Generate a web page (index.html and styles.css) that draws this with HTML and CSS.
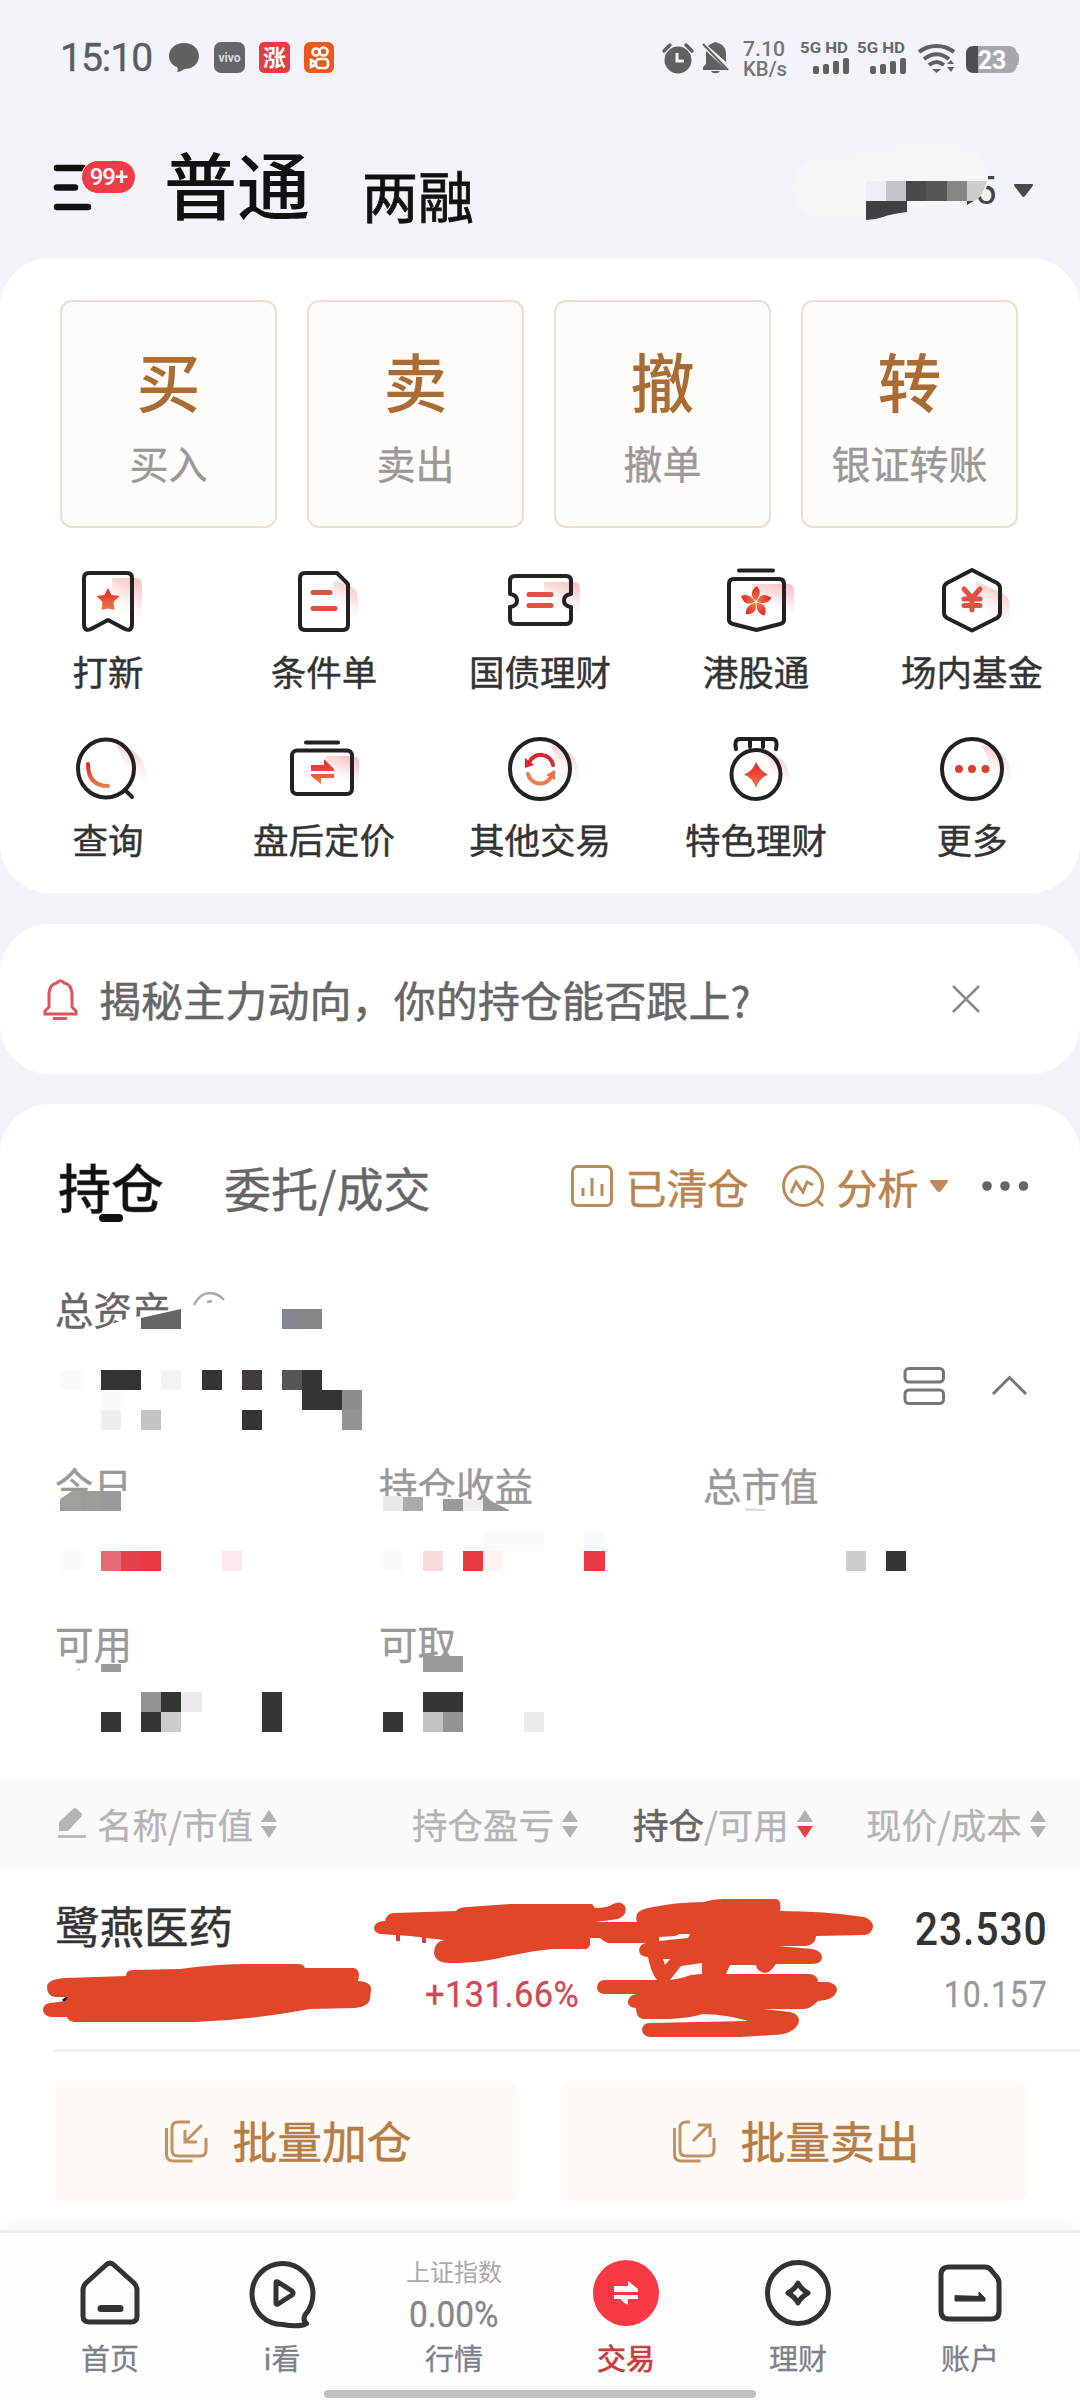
FILE: index.html
```html
<!DOCTYPE html>
<html lang="zh-CN">
<head>
<meta charset="utf-8">
<title>交易</title>
<link rel="stylesheet" href="styles.css">
</head>
<body>
<svg class="defs" width="0" height="0" aria-hidden="true">
  <defs>
    <linearGradient id="red" x1="0" y1="0" x2="0" y2="1"><stop offset="0" stop-color="#e8202a"/><stop offset="1" stop-color="#f07a48"/></linearGradient>
    <linearGradient id="glow" x1="1" y1="0" x2=".55" y2="1"><stop offset="0" stop-color="#f9b9b9"/><stop offset=".4" stop-color="#fbd0d0" stop-opacity=".8"/><stop offset="1" stop-color="#fff" stop-opacity="0"/></linearGradient>
  </defs>
</svg>
<div class="screen">
  <div class="status">
    <span class="clock num">15:10</span>
    <svg class="status-left" width="170" height="34" viewBox="166 41 170 34">
      <path d="M184 43c9 0 15 6 15 13s-6 13-14 13c-2 0-3 3-8 3 1-2 1-4 0-5-5-2-8-6-8-11 0-7 6-13 15-13z" fill="#5f6163"/>
      <rect x="214" y="42" width="31" height="31" rx="7" fill="#646668"/>
      <text x="229.500" y="62" text-anchor="middle" class="vivo">vivo</text>
      <rect x="259" y="42" width="31" height="31" rx="5" fill="#e83c43"/>
      <text x="274.500" y="66" text-anchor="middle" class="rise">涨</text>
      <rect x="304" y="42" width="30" height="31" rx="6" fill="#ea5a1e"/>
      <g fill="none" stroke="#fff" stroke-width="2.600"><circle cx="316" cy="52" r="3.500"/><circle cx="323.500" cy="51.500" r="4"/><rect x="316" y="59" width="12" height="9" rx="3"/><path d="M315 62l-4-2v7l4-2z"/></g>
    </svg>
    <svg class="status-right" width="362" height="40" viewBox="660 38 362 40">
      <g fill="#5f6163">
        <circle cx="678" cy="60" r="13.500"/><path d="M664 51l6-6M692 51l-6-6" stroke="#5f6163" stroke-width="3.500" stroke-linecap="round"/>
        <path d="M677 53v8h7" fill="none" stroke="#f3f4f9" stroke-width="3"/>
        <path d="M706 51l21 19h-24v-3l3-3zM708 46c2-2 3-2 5-3 1-1 4-1 5 0 6 2 8 6 8 11v8zM711 71h9c-1 3-8 3-9 0z"/>
        <path d="M703 44l25 26" stroke="#5f6163" stroke-width="2"/>
        <rect x="813" y="66" width="6" height="8" rx="2"/><rect x="823" y="64" width="6" height="10" rx="2"/><rect x="833" y="61" width="6" height="13" rx="2"/><rect x="843" y="58" width="6" height="16" rx="2"/>
        <rect x="870" y="66" width="6" height="8" rx="2"/><rect x="880" y="64" width="6" height="10" rx="2"/><rect x="890" y="61" width="6" height="13" rx="2"/><rect x="900" y="58" width="6" height="16" rx="2"/>
        <path d="M932 69h9l-4.500 4zM947 64l4-4 3 4zM947 67h7l-3 5z"/>
      </g>
      <g fill="none" stroke="#5f6163" stroke-width="4"><path d="M919 52c10-8 25-8 35 0M924 59c8-6 17-6 25 0M929 65c5-4 10-4 15 0"/></g>
      <path d="M1013 53h5q2 5 0 12h-5z" fill="#a5a7ab"/>
      <rect x="966" y="46" width="51" height="27" rx="8" fill="#a5a7ab"/><path d="M974 46h4v27h-4q-8 0-8-8v-11q0-8 8-8z" fill="#4c4e50"/>
      <text x="992" y="68.500" text-anchor="middle" class="batt">23</text>
      <text x="743" y="56" class="rate" textLength="42" lengthAdjust="spacingAndGlyphs">7.10</text>
      <text x="743" y="75.500" class="rate" textLength="44" lengthAdjust="spacingAndGlyphs">KB/s</text>
      <text x="800" y="53" class="net" textLength="48" lengthAdjust="spacingAndGlyphs">5G HD</text>
      <text x="857" y="53" class="net" textLength="48" lengthAdjust="spacingAndGlyphs">5G HD</text>
    </svg>
  </div>

  <header class="header">
    <div class="menu">
      <svg width="40" height="50" viewBox="54 162 40 50"><path d="M57 168h26M57 187.500h18M57 207h31" stroke="#111" stroke-width="6.500" stroke-linecap="round"/></svg>
      <span class="badge num">99+</span>
    </div>
    <h1 class="mode-on">普通</h1>
    <h2 class="mode">两融</h2>
    <svg class="account" width="250" height="90" viewBox="790 138 250 90">
      <text x="975" y="204" class="acct-no">5</text>
      <path d="M838 155C870 156 885 142 925 142C970 140 990 160 988 181C985 203 965 206 907 206C890 211 880 220 845 220C810 222 793 208 793 188C793 168 810 154 838 155Z" fill="#f6f6f6"/>
      <path d="M866 181h20v20h-20z" fill="#eeeff6"/><path d="M886 181h20v20h-20z" fill="#c3c5cb"/><path d="M906 181h20v20h-20z" fill="#4a4a4a"/><path d="M926 181h21v20h-21z" fill="#545652"/><path d="M947 181h20v20h-20z" fill="#868686"/><path d="M967 181h20q-4 15-12 20h-8z" fill="#cdcdcd"/>
      <path d="M866 201h41v11q-16 2-24 5t-17 3z" fill="#423e41"/><path d="M967 201h7l-7 4z" fill="#424242"/>
      <path d="M1015 184h17q2 0 0 3l-7 9q-2 2-3 0l-7-9q-2-3 0-3z" fill="#4a4a4a"/>
    </svg>
  </header>

  <section class="card trade">
    <div class="quick">
      <button class="quick-item"><b>买</b><span>买入</span></button>
      <button class="quick-item"><b>卖</b><span>卖出</span></button>
      <button class="quick-item"><b>撤</b><span>撤单</span></button>
      <button class="quick-item"><b>转</b><span>银证转账</span></button>
    </div>
    <div class="grid">
      <div class="tool"><svg class="ico" width="72" height="66" viewBox="72 568 72 66"><path d="M112 578h24q6 0 6 8v34h-30z" fill="url(#glow)"/><path d="M84 578q0-5 5-5h38q5 0 5 5v46q0 8-7 5l-17-9-17 9q-7 3-7-5z"/><path class="f" d="M108 588l3.500 7 8 1-6 6 1 8-6.500-1.500-6.500 1.500 1-8-6-6 8-1z"/></svg><span>打新</span></div>
      <div class="tool"><svg class="ico" width="72" height="66" viewBox="288 568 72 66"><path d="M334 581l14 4q10 4 10 14v20h-24z" fill="url(#glow)"/><path d="M305 573h32l11 11v41q0 5-5 5h-38q-5 0-5-5v-47q0-5 5-5z"/><path class="r" d="M313 592.500h17M313 608.500h22"/></svg><span>条件单</span></div>
      <div class="tool"><svg class="ico" width="72" height="66" viewBox="504 568 72 66"><path d="M544 582h30q6 0 6 7v24h-36z" fill="url(#glow)"/><path d="M515 576h51q5 0 5 5v13q-7 1-7 6.500t7 6.500v12q0 5-5 5h-51q-5 0-5-5v-12q7-1 7-6.500t-7-6.500v-13q0-5 5-5z"/><path class="r" d="M529 594.500h22M529 605.500h22"/></svg><span>国债理财</span></div>
      <div class="tool"><svg class="ico" width="72" height="66" viewBox="720 568 72 66"><path d="M752 584h36q6 0 6 7v24h-42z" fill="url(#glow)"/><path d="M739 570.500h34M734 579h45q5 0 5 5v36q0 3-4 4l-23.500 6-23.500-6q-4-1-4-4v-36q0-5 5-5z"/><g class="f"><path id="petal" d="M756 601q-9-8 1-15q6 7-1 15z"/><use href="#petal" transform="rotate(72 756 602)"/><use href="#petal" transform="rotate(144 756 602)"/><use href="#petal" transform="rotate(216 756 602)"/><use href="#petal" transform="rotate(288 756 602)"/></g></svg><span>港股通</span></div>
      <div class="tool"><svg class="ico" width="72" height="66" viewBox="936 568 72 66"><path d="M976 581l28 13q5 3 5 9v25h-33z" fill="url(#glow)"/><path d="M972 570l25 13q3 2 3 5v25q0 3-3 5l-25 12.500-25-12.500q-3-2-3-5v-25q0-3 3-5z"/><path class="r" d="M964 589l8 9 8-9M972 599v11M964 599h16M964 605.500h16"/></svg><span>场内基金</span></div>
      <div class="tool"><svg class="ico" width="72" height="66" viewBox="72 735 72 66"><path d="M116 744q30 4 31 37h-22q1-22-9-37z" fill="url(#glow)"/><ellipse cx="106" cy="767.500" rx="28" ry="29"/><path d="M125 789l7 7"/><path d="M88 763q0 22 20 22" stroke="url(#red)"/></svg><span>查询</span></div>
      <div class="tool"><svg class="ico" width="72" height="66" viewBox="288 735 72 66"><path d="M326 755h27q6 0 6 7v24h-33z" fill="url(#glow)"/><path d="M306 741.500h32"/><rect x="292" y="749.500" width="60" height="43.500" rx="5"/><path class="f" d="M311 764h13v-6l10 10v2h-23zM334 773v4h-13v6l-10-8v-2z"/></svg><span>盘后定价</span></div>
      <div class="tool"><svg class="ico" width="72" height="66" viewBox="504 735 72 66"><path d="M550 744q30 4 30 37h-22q1-22-8-37z" fill="url(#glow)"/><circle cx="540" cy="768" r="30"/><path d="M529 762a12.500 12.500 0 0 1 24 2" stroke="#dc2430"/><path d="M552 774a12.500 12.500 0 0 1-24-1" stroke="#ee7c48"/><path d="M525 757v10l9-3z" fill="#dc2430" stroke="none"/><path d="M555 779v-10l-9 5z" fill="#ee7048" stroke="none"/></svg><span>其他交易</span></div>
      <div class="tool"><svg class="ico" width="72" height="66" viewBox="720 735 72 66"><path d="M764 751q27 4 27 35h-19q1-20-8-35z" fill="url(#glow)"/><path d="M736 748q-2-9 3-10h34q5 1 3 10M750 738v8M763 738v8"/><circle cx="756" cy="773.500" r="24.500"/><path class="f" d="M756 761q4 9 12 12.500q-9 4-12 13.500q-3-10-12-13.500q9-3.500 12-12.500z"/></svg><span>特色理财</span></div>
      <div class="tool"><svg class="ico" width="72" height="66" viewBox="936 735 72 66"><path d="M981 744q30 4 31 37h-22q1-22-9-37z" fill="url(#glow)"/><circle cx="972" cy="768" r="30"/><g fill="#dc4030" stroke="none"><circle cx="959" cy="768" r="4"/><circle cx="972" cy="768" r="4"/><circle cx="985.500" cy="768" r="4"/></g></svg><span>更多</span></div>
    </div>
  </section>

  <section class="card banner">
    <svg width="36" height="44" viewBox="42 977 36 44" fill="none" stroke="#dd555c" stroke-width="3"><path d="M45 1014v-3l4-4v-14q1-9 8-10q1-2 3.500-2t3.500 2q7 1 8 10v14l4 4v3zM53 1018.500h14"/></svg>
    <p>揭秘主力动向，你的持仓能否跟上?</p>
    <svg class="close" width="30" height="30" viewBox="951 985 30 30"><path d="M953 986l26 26M979 986l-26 26" stroke="#8a8a8a" stroke-width="2.500"/></svg>
  </section>

  <section class="card holdings">
    <div class="tabs">
      <span class="tab tab-on">持仓</span>
      <span class="tab">委托/成交</span>
      <svg class="t1" width="44" height="44" viewBox="570 1165 44 44" fill="none" stroke="#bd8a58" stroke-width="3"><rect x="572.500" y="1167.500" width="39" height="39" rx="5"/><path d="M583 1189v8M592 1179v18M602 1185v12"/></svg>
      <span class="link">已清仓</span>
      <svg class="t2" width="44" height="44" viewBox="780 1165 44 44" fill="none" stroke="#bd8a58" stroke-width="3"><circle cx="802" cy="1187" r="19.500"/><path d="M815 1200l7 7M790 1194l5-11 7 10 4-10 6 3"/></svg>
      <span class="link">分析</span>
      <svg class="t3" width="20" height="14" viewBox="928 1178 20 14"><path d="M930 1179h16q2 0 0 3l-6 8q-2 2-4 0l-6-8q-2-3 0-3z" fill="#bd8a58"/></svg>
      <svg class="t4" width="48" height="12" viewBox="979 1181 48 12" fill="#666"><circle cx="985" cy="1187" r="4.800"/><circle cx="1003" cy="1187" r="4.800"/><circle cx="1021.500" cy="1187" r="4.800"/></svg>
    </div>
    <div class="asset"><span>总资产</span><svg width="36" height="18" viewBox="191 1290 36 18" fill="none" stroke="#aaa" stroke-width="2.500"><path d="M194 1305q6-12 16-12q8 0 14 7M207 1302l5-1"/></svg></div>
    <div class="asset-tools">
      <svg width="44" height="40" viewBox="902 1366 44 40" fill="none" stroke="#777" stroke-width="3"><rect x="905" y="1368.500" width="38.500" height="13.500" rx="4"/><rect x="905" y="1390" width="38.500" height="13.500" rx="4"/></svg>
      <svg width="36" height="24" viewBox="992 1374 36 24" fill="none" stroke="#777" stroke-width="3"><path d="M993 1394l16.500-16.500 16.500 16.500"/></svg>
    </div>
    <div class="stats">
      <span>今日</span><span>持仓收益</span><span>总市值</span>
      <span>可用</span><span>可取</span>
    </div>

    <div class="thead">
      <svg class="pencil" width="30" height="32" viewBox="57 1810 30 32"><path d="M59 1833v-9l14-13q2-2 4 0l4 4q2 2 0 4l-13 14z" fill="#b4b4b4"/><path d="M58 1838.500h28" stroke="#b4b4b4" stroke-width="2.500"/></svg>
      <span class="c1">名称/市值</span><svg class="sort" viewBox="0 0 16 30"><path d="M8 1l8 12H0z"/><path d="M8 29l8-12H0z"/></svg>
      <span class="c2">持仓盈亏</span><svg class="sort" viewBox="0 0 16 30"><path d="M8 1l8 12H0z"/><path d="M8 29l8-12H0z"/></svg>
      <span class="c3"><em>持仓</em>/可用</span><svg class="sort" viewBox="0 0 16 30"><path d="M8 1l8 12H0z"/><path class="down" d="M8 29l8-12H0z"/></svg>
      <span class="c4">现价/成本</span><svg class="sort" viewBox="0 0 16 30"><path d="M8 1l8 12H0z"/><path d="M8 29l8-12H0z"/></svg>
    </div>
    <div class="row">
      <span class="stock">鹭燕医药</span>
      <span class="rate-up num">+131.66%</span>
      <div class="prices"><span class="price num">23.530</span><span class="cost num">10.157</span></div>
    </div>
    <div class="batch">
      <button><svg width="44" height="44" viewBox="166 2120 44 44"><path d="M192 2123h-12q-6 0-6 6v22q0 6 6 6h22q6 0 6-6v-12M168.500 2129v26q0 7 7 7h19M204 2126l-16 16M187 2131v12h12"/></svg>批量加仓</button>
      <button><svg width="44" height="44" viewBox="674 2120 44 44"><path d="M692 2123h-4q-6 0-6 6v22q0 6 6 6h22q6 0 6-6v-12M676.500 2129v26q0 7 7 7h19M695 2142l16-16M700 2126h12v12"/></svg>批量卖出</button>
    </div>
  </section>

  <nav class="nav">
    <div class="nav-item"><svg width="70" height="70" viewBox="75 2259 70 70"><path d="M83 2290q0-4 3-7l20-18q4-4 8 0l20 18q3 3 3 7v26q0 6-6 6H89q-6 0-6-6z"/><path d="M101 2308.500h19" stroke-width="7"/></svg><span>首页</span></div>
    <div class="nav-item"><svg width="70" height="70" viewBox="247 2259 70 70"><path d="M305 2315q8-9 8-22a30.500 30.500 0 1 0-30.500 31.500q17 3 24-1q-4-3-1.500-8.500z"/><path d="M276 2283q0-2 2-1l14 9q2 2 0 4l-14 9q-2 1-2-1z"/></svg><span>i看</span></div>
    <div class="nav-item index"><small>上证指数</small><b class="num">0.00%</b><span>行情</span></div>
    <div class="nav-item active"><svg width="70" height="70" viewBox="591 2259 70 70"><circle cx="626" cy="2293" r="33" fill="#f83842" stroke="none"/><path d="M614 2286h14v-5l10 8v3h-24zM638 2295v4h-10v6q-6-3-7-6h-7v-4z" fill="#fff" stroke="none"/></svg><span>交易</span></div>
    <div class="nav-item"><svg width="70" height="70" viewBox="763 2259 70 70"><circle cx="798" cy="2293" r="30.500"/><path d="M798 2283q3 6 10 10q-7 4-10 10q-3-6-10-10q7-4 10-10z"/></svg><span>理财</span></div>
    <div class="nav-item"><svg width="70" height="70" viewBox="935 2259 70 70"><path d="M949 2267h36q4 0 6 3l5 6q3 3 3 7v28q0 8-8 8h-42q-8 0-8-8v-36q0-8 8-8z"/><path d="M955 2296v5h30v-3l-6-6v4z" fill="#333" stroke-width="1"/></svg><span>账户</span></div>
  </nav>
  <div class="home-bar"></div>

  <!-- privacy marks laid over the private figures -->
  <svg class="privacy" width="1080" height="2400" viewBox="0 0 1080 2400">
    <path d="M93 1331l35-13 14-2v15zM141 1320l27-8v22h-27zM56 1491h75v22H56zM380 1497l58-1 40 4h11l19 10v5H380z" fill="#fff"/>
    <g shape-rendering="crispEdges">
      <g fill="#333532"><path d="M101 1370h40v20h-40zM202 1370h20v20h-20zM302 1370h20v20h21v20h-41zM242 1410h20v20h-20zM262 1692h20v40h-20zM161 1692h20v20h-20zM101 1712h20v20h-20zM141 1712h20v20h-20zM383 1712h20v20h-20zM423 1692h40v20h-40zM886 1551h20v20h-20z"/></g>
      <path d="M60 1370h21v20H60zM101 1390h20v20h-20z" fill="#fafcfa"/><path d="M161 1370h20v20h-20z" fill="#f5f3f6"/>
      <path d="M242 1370h20v20h-20z" fill="#423c40"/><path d="M282 1370h20v20h-20z" fill="#545654"/>
      <path d="M342 1390h20v20h-20z" fill="#8c8e8b"/><path d="M342 1410h20v20h-20zM141 1692h20v20h-20zM443 1712h20v20h-20z" fill="#949295"/>
      <path d="M101 1410h20v20h-20z" fill="#eee"/><path d="M141 1410h20v20h-20zM423 1712h20v20h-20z" fill="#c4c2c5"/>
      <path d="M161 1712h20v20h-20zM846 1551h20v20h-20z" fill="#cdcbce"/><path d="M181 1692h21v20h-21zM524 1712h20v20h-20z" fill="#edebee"/>
      <path d="M282 1309h20v20h-20z" fill="#838591"/><path d="M302 1309h20v20h-20z" fill="#868686"/>
      <path d="M101 1551h20v20h-20z" fill="#e56c77"/><path d="M121 1551h20v20h-20z" fill="#e2404a"/><path d="M141 1551h20v20h-20zM463 1551h20v20h-20zM584 1551h21v20h-21z" fill="#ea3a43"/>
      <path d="M222 1551h20v20h-20z" fill="#fbe9ed"/><path d="M423 1551h20v20h-20z" fill="#f6dadd"/><path d="M483 1551h20v20h-20z" fill="#fdf3f2"/>
      <path d="M60 1551h21v20H60zM383 1551h20v20h-20zM483 1531h61v20h-61zM584 1531h21v20h-21z" fill="#fcfaff"/>
      <path d="M81 1491h20v20H81z" fill="#9d9c99"/><path d="M101 1491h20v20h-20zM443 1499h20v12h-20zM101 1664h20v8h-20zM423 1656h40v16h-40z" fill="#9b999c"/>
      <path d="M383 1496h20v15h-20z" fill="#e8e8e8"/><path d="M403 1497h20v14h-20z" fill="#acaaad"/><path d="M463 1500h20v11h-20z" fill="#efefef"/>
    </g>
    <path d="M141 1318l40-9v20h-40z" fill="#636562"/><path d="M60 1499l12-8h9v20H60z" fill="#9da29b"/><path d="M483 1497l26 13v1h-26z" fill="#9b999c"/>
    <path d="M745 1508l20 1v2h-20zM75 1671l5-4v4z" fill="#ddd"/>
    <path d="M63 2001l5-4" stroke="#222" stroke-width="3"/><path d="M398 1932v9M424 1934v9" stroke="#de3548" stroke-width="4"/>
    <g fill="#e14628" fill-rule="evenodd">
      <path d="M47 1987Q47 1979 66 1978L126 1976Q126 1970 133 1970L180 1969Q215 1964 250 1964H300Q304 1965 305 1968H354Q361 1970 358 1981Q372 1982 371 1990L370 1999Q368 2007 355 2008L310 2009Q250 2020 195 2022H74Q68 2021 67 2017H50Q43 2015 43 2010Q43 2004 50 2003L66 2001L68 1997H55Q47 1996 47 1987Z"/>
      <path d="M374 1928Q375 1921 385 1921Q387 1913 394 1913L456 1911Q459 1907 468 1907L510 1904H592L595 1908Q608 1908 613 1904Q620 1900 625 1906Q628 1915 618 1919L595 1922H637Q633 1911 648 1908Q675 1902 704 1902Q713 1899 724 1899H776Q782 1900 780 1911Q825 1911 864 1917Q873 1920 873 1927Q872 1934 864 1935L816 1936Q816 1944 806 1946H778L812 1949Q822 1951 822 1957Q822 1964 812 1964H776Q770 1973 765 1973Q757 1972 756 1965H730L726 1974H810Q818 1975 818 1982H828Q837 1984 837 1990Q835 2000 818 2001Q810 2009 804 2009H764L790 2012Q799 2014 799 2021Q798 2027 791 2031Q785 2035 772 2035L740 2037H650Q642 2036 642 2029Q643 2023 650 2023L700 2022L748 2021Q730 2015 703 2014Q690 2018 670 2019H643Q636 2018 636 2008Q627 2007 628 2001Q629 1995 637 1994H604Q597 1993 597 1987Q598 1980 605 1980H657Q651 1973 648 1957Q639 1957 639 1950Q640 1944 646 1943H608Q603 1941 600 1938H590V1945Q588 1950 583 1949H552C510 1953 490 1964 450 1963Q435 1963 434 1953Q434 1942 444 1940L410 1936L380 1934Q374 1932 374 1928ZM659 1937L675 1936L680 1934H690L688 1938L659 1941ZM663 1959H670L665 1965ZM681 1966L702 1963V1974L691 1975Q681 1979 670 1980Z"/>
    </g>
  </svg>
</div>
</body>
</html>
```
FILE: styles.css
```css
* { box-sizing: border-box; margin: 0; padding: 0; }
body { width: 1080px; height: 2400px; overflow: hidden; background: #f3f4f9; font-family: "Noto Sans CJK SC", sans-serif; line-height: 1; color: #333; }
button { border: 0; background: none; font: inherit; }
svg { display: block; flex: none; overflow: visible; }
.defs { position: absolute; }
.num { font-family: Roboto, "Noto Sans CJK SC", sans-serif; }
.screen { position: relative; width: 1080px; height: 2400px; display: flex; flex-direction: column; }

.status { height: 116px; display: flex; align-items: center; padding: 0 58px 0 60px; }
.clock { width: 106px; font-size: 39px; letter-spacing: -1px; color: #5b5d5f; -webkit-text-stroke: .4px #5b5d5f; }
.status-right { margin-left: auto; }
.vivo { font: 700 12px Roboto, sans-serif; fill: #ddd; }
.rise { font: 700 23px "Noto Sans CJK SC", sans-serif; fill: #fff; }
.batt { font: 700 25px Roboto, sans-serif; fill: #fff; }
.rate { font: 500 19.500px/1 Roboto, sans-serif; fill: #737577; }
.net { font: 700 15.500px Roboto, sans-serif; fill: #66686a; }

.header { height: 142px; display: flex; padding-left: 54px; position: relative; }
.menu { position: relative; width: 110px; padding-top: 46px; }
.badge { position: absolute; left: 27px; top: 44px; width: 55px; height: 34px; border-radius: 17px; border: 1px solid #f3f4f9; background: #ef3c46; color: #fff; font-size: 24px; font-weight: 500; line-height: 33px; text-align: center; letter-spacing: -1px; }
.mode-on { margin-top: 30px; font-size: 73px; font-weight: 500; color: #111; width: 198px; }
.mode { margin-top: 50px; font-size: 56px; font-weight: 400; color: #111; -webkit-text-stroke: .8px #111; }
.account { margin: 22px 40px 0 auto; }
.acct-no { font: 400 38px Roboto, sans-serif; fill: #444; }

.card { background: #fff; border-radius: 50px; }
.trade { height: 635px; padding-top: 42px; }
.quick { display: grid; grid-template-columns: repeat(4, 217px); gap: 30px; padding-left: 60px; }
.quick-item { height: 228px; border: 2px solid #ecdfd2; border-radius: 12px; background: #fffbf8; display: flex; flex-direction: column; align-items: center; padding-top: 45px; }
.quick-item b { font-size: 64px; font-weight: 500; color: #a96c34; }
.quick-item span { margin-top: 32px; font-size: 39px; color: #999; -webkit-text-stroke: .4px #999; }
.grid { display: grid; grid-template-columns: repeat(5, 216px); grid-auto-rows: 168px; padding-top: 40px; }
.tool { display: flex; flex-direction: column; align-items: center; font-size: 35.500px; color: #333; -webkit-text-stroke: .4px #333; }
.tool span { margin-top: 19px; }
.ico { fill: none; stroke: #222; stroke-width: 4; stroke-linecap: round; stroke-linejoin: round; }
.ico .f { fill: url(#red); stroke: none; }
.ico [fill^="url"] { stroke: none; }
.ico .r { stroke: #de5040; stroke-width: 5; }

.banner { margin-top: 31px; height: 150px; display: flex; align-items: center; padding-left: 42px; }
.banner p { margin-left: 21px; width: 652px; font-size: 42px; letter-spacing: .1px; white-space: nowrap; color: #666; -webkit-text-stroke: .5px #666; }
.banner .close { margin: 2px 0 0 200px; }

.holdings { margin-top: 30px; height: 1126px; border-radius: 50px 50px 0 0; }
.tabs { height: 169px; display: flex; align-items: center; padding: 0 0 5px 58px; }
.tab { font-size: 47px; color: #666; -webkit-text-stroke: .4px #666; }
.tab-on { position: relative; font-size: 53px; font-weight: 500; color: #111; margin-right: 60px; }
.tab-on::after { content: ""; position: absolute; left: 41px; bottom: -9px; width: 24px; height: 8px; border-radius: 4px; background: #111; }
.link { font-size: 41px; color: #b98450; margin-left: 11px; -webkit-text-stroke: .5px #b98450; }
.t1 { margin-left: 140px; } .t2 { margin-left: 33px; } .t3 { margin-left: 11px; } .t4 { margin-left: 32px; }
.asset { height: 72px; display: flex; padding: 16px 0 0 55px; font-size: 38.500px; color: #666; -webkit-text-stroke: .4px #666; }
.asset svg { margin: 1px 0 0 20px; }
.asset-tools { height: 82px; display: flex; align-items: center; justify-content: flex-end; gap: 46px; padding-right: 52px; }
.stats { height: 352px; display: grid; grid-template-columns: 324px 324px 1fr; grid-template-rows: 158px 1fr; padding: 38px 0 0 55px; font-size: 38.500px; color: #999; -webkit-text-stroke: .4px #999; }
.thead { height: 90px; background: #fafafa; display: flex; align-items: center; padding-left: 57px; font-size: 35.500px; color: #b4b4b4; -webkit-text-stroke: .3px #b4b4b4; }
.thead em { font-style: normal; color: #666; -webkit-text-stroke: .6px #666; }
.sort { width: 16px; height: 30px; fill: #b2b2b2; margin-left: 8px; }
.sort .down { fill: #ec3c46; }
.c1 { margin-left: 10px; } .c2 { margin-left: 135px; } .c3 { margin-left: 55px; } .c4 { margin-left: 53px; }
.row { height: 183px; margin-left: 54px; border-bottom: 3px solid #f1f1f1; position: relative; display: flex; }
.stock { margin-top: 34px; padding-left: 1px; width: 371px; font-size: 44.500px; color: #333; -webkit-text-stroke: .5px #333; }
.rate-up { margin-top: 108px; font-size: 36px; color: #d04a55; transform: scaleX(.955); transform-origin: 0 0; letter-spacing: .5px; -webkit-text-stroke: .3px #d04a55; }
.prices { margin-left: auto; margin-right: 32px; display: flex; flex-direction: column; align-items: flex-end; padding-top: 36px; }
.price { font-size: 47px; font-weight: 500; color: #333; transform: scaleX(.87); transform-origin: 100% 0; letter-spacing: 1px; }
.cost { margin-top: 25px; font-size: 36px; color: #999; transform: scaleX(.89); transform-origin: 100% 0; letter-spacing: 1px; -webkit-text-stroke: .3px #999; }
.batch { display: grid; grid-template-columns: 464px 466px; gap: 43px; padding: 29px 0 0 54px; }
.batch button { height: 121px; border-radius: 10px; background: #fffaf6; display: flex; align-items: center; justify-content: center; gap: 24px; font-size: 44.800px; padding: 0 0 2px 4px; color: #b67d46; -webkit-text-stroke: .5px #b67d46; }
.batch svg { fill: none; stroke: #c09264; stroke-width: 3; }

.nav { height: 170px; background: #fdfdfe; border-top: 3px solid #eee; box-shadow: 0 -6px 20px rgba(0,0,0,.035); display: grid; grid-template-columns: repeat(6, 172px); padding: 26px 0 0 24px; }
.nav-item { display: flex; flex-direction: column; align-items: center; font-size: 29px; color: #7c8089; -webkit-text-stroke: .3px #7c8089; }
.nav-item svg { fill: none; stroke: #333; stroke-width: 5; stroke-linecap: round; stroke-linejoin: round; }
.nav-item span { margin-top: 14px; }
.index small { font-size: 24px; color: #aaa; -webkit-text-stroke: 0; }
.index b { margin-top: 13px; height: 33px; font-size: 37px; font-weight: 400; color: #888; transform: scaleX(.9); }
.active { color: #c83c3c; }
.active span { -webkit-text-stroke: .7px #c83c3c; }
.home-bar { position: absolute; left: 324px; top: 2390px; width: 432px; height: 8px; border-radius: 4px; background: #c0c0c0; }
.privacy { position: absolute; left: 0; top: 0; pointer-events: none; }
```
